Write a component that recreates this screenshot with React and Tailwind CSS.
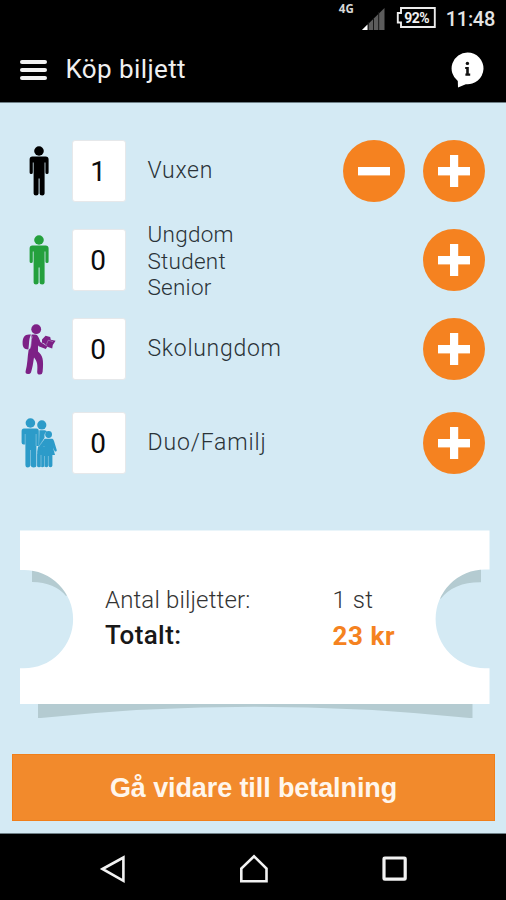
import React from "react";

function Adult({ color }) {
  return (
    <svg viewBox="0 0 20 50" className="h-[50px] w-[20px]" fill={color}>
      <ellipse cx="10" cy="5" rx="4.8" ry="4.7" />
      <path d="M3.4 10.6H16.6Q19.6 10.6 19.6 13.6V26.4Q19.6 28 18 28Q16.4 28 16.4 26.4V16.4H15.6V47.4Q15.6 49.4 13.2 49.4Q10.6 49.4 10.6 47.4V32.6H9.6V47.4Q9.6 49.4 7 49.4Q4.6 49.4 4.6 47.4V16.4H3.8V26.4Q3.8 28 2.2 28Q0.6 28 0.6 26.4V13.6Q0.6 10.6 3.4 10.6Z" />
    </svg>
  );
}

function Student() {
  return (
    <svg viewBox="0 0 34 51" className="h-[51px] w-[34px]" fill="#7d2186">
      <circle cx="14.2" cy="5.2" r="4.9" />
      <path d="M9 10.6C3 9.6 0.6 13 0.6 19C0.6 23.2 2 25.4 6.4 25.4C7.4 20 6.6 15 9 10.6Z" />
      <path d="M9.6 10.6H13.4C15.6 10.8 17 13.6 18.4 18L22.6 20.6L25.4 22.4L23.8 25L16.6 22.2L16 21.2V27.4C20.4 31 22 35 20.6 48Q20.2 50.8 17.8 50.6Q15.2 50.6 15.2 48C15.8 41 15.4 37.2 12 33.4C11.2 39 10.4 44 9 48.4Q8 50.2 6 50Q3 49.6 3.6 47.2C5.6 40.6 5.4 33 6.6 26C9.6 24.4 8.8 16 9.6 10.6Z" />
      <path d="M7.6 25C9.8 21.8 8.4 16 10.2 12.4" fill="none" stroke="#d4eaf4" strokeWidth="0.6" />
      <path d="M20 15.4L23.6 11.8L28.2 13L28.8 15.8L33.6 16.8L30.8 21L30.2 24.6L24.6 22.4L22.2 19.6L20 18.8Z" />
      <path d="M24.4 20.6L26.2 16.2M20.4 19L25.4 22.2M26.2 16.2L31 17.6" fill="none" stroke="#d4eaf4" strokeWidth="0.35" />
    </svg>
  );
}

function Family() {
  return (
    <svg viewBox="0 0 36 50" className="h-[50px] w-[36px]" fill="#2c9bc9">
      <ellipse cx="9.4" cy="5" rx="4.8" ry="4.7" />
      <path d="M3 10.6H15.4Q17.8 10.6 17.8 13.2V28H15.4V47.2Q15.4 49.4 12.6 49.4Q10 49.4 9.7 47.4V32H9.3V47.4Q9 49.4 6.8 49.4Q4.4 49.4 4.4 47.2V26L3.6 26.4Q0.6 27 0.6 24.4V13.2Q0.6 10.6 3 10.6Z" />
      <path d="M4.2 16V26M15.1 16V28" stroke="#d4eaf4" strokeWidth="0.4" />
      <circle cx="20.8" cy="6.9" r="4.6" />
      <path d="M18.4 12.2H23.6Q25.6 12.4 25.8 13.4Q22.8 14.8 23.6 19.6L19.8 27.4L23 29L23.8 36V48.6H16.2V33.4L17 29L18 27Z" />
      <circle cx="27.6" cy="16.5" r="3.4" />
      <path d="M23.6 20.8H31.4Q32.4 21 33 23L35.8 32.2Q35.6 34 33.8 33.4L32 29.4L34 37H31.4V47.6Q31.4 49.2 29.4 49.2Q27.6 49.2 27.4 47.6Q27.2 49.2 25.4 49.2Q23.6 49.2 23.4 47.6Q23 49.2 21.4 49.2Q20 49.2 20 48Q19.4 49.2 18 49.2Q16.4 49.2 16.4 48V36H20.6L23.4 28L19.6 31.4L17.6 29.6Z" />
      <path d="M23.2 20.6L17.6 29M20 37V48.5M23.5 38V48.5M27.4 38V48.5" fill="none" stroke="#d4eaf4" strokeWidth="0.4" />
    </svg>
  );
}

function RoundButton({ minus }) {
  return (
    <button className="flex size-[62px] items-center justify-center rounded-full bg-[#f58220]">
      <svg viewBox="0 0 32 32" className="size-8" fill="#fff">
        <rect x="0" y="12" width="32" height="8.4" />
        {!minus && <rect x="12" y="0" width="8.2" height="32.4" />}
      </svg>
    </button>
  );
}

function Row({ icon, count, label, labelClass, minus }) {
  return (
    <div className="flex h-[62px] items-center">
      <div className="flex w-[72px] justify-center pl-[5px]">{icon}</div>
      <div className="flex h-[62px] w-[54px] items-center justify-center rounded-[3px] border border-[#e6e8ea] bg-white pr-[2px] pt-[2px] font-['Roboto',sans-serif] text-[28px] leading-none text-[#0c0c0c]">
        {count}
      </div>
      <div className={`ml-[21.5px] flex-1 whitespace-pre-line font-['Roboto',sans-serif] font-light leading-[26.5px] text-[#2a3338] ${labelClass}`}>
        {label}
      </div>
      <div className="mr-[21px] flex gap-[18px]">
        {minus && <RoundButton minus />}
        <RoundButton />
      </div>
    </div>
  );
}

export default function App() {
  return (
    <div className="flex h-[900px] w-[506px] flex-col overflow-hidden bg-[#d4eaf4] font-['Roboto',sans-serif]">
      <header className="h-[103px] border-b border-[#6f8087] bg-black text-white">
        <div className="flex h-[37px] items-start justify-end pr-[11px]">
          <span className="mr-[8px] mt-[3px] font-['Open_Sans',sans-serif] text-[11.5px] font-bold leading-[12px] text-[#d8d8d8]">4G</span>
          <svg viewBox="0 0 23 22" className="mr-[11px] mt-[8px] h-[22px] w-[23px]">
            <path d="M0 22L22.5 0V22Z" fill="#5c5c5c" />
            <path d="M0 22L5.5 16.6V22Z" fill="#fff" />
            <path d="M6.3 14V22M11.5 10V22M16.7 4V22" stroke="#161616" strokeWidth="1" />
          </svg>
          <div className="relative mr-[10px] mt-[7px] flex h-[21px] w-[40px] items-center justify-center pl-[2px]">
            <svg viewBox="0 0 40 21" className="absolute inset-0 h-[21px] w-[40px]">
              <path d="M5 1H38.8V20H5V15.5H1.8V6H5Z" fill="none" stroke="#ececec" strokeWidth="1.9" />
            </svg>
            <span className="text-[14px] font-bold leading-none tracking-[-0.5px] text-[#f0f0f0]">92%</span>
          </div>
          <span className="mt-[9px] text-[20px] font-medium leading-[20px] tracking-[-0.3px] text-[#e4e4e4]">11:48</span>
        </div>
        <div className="flex h-[65px] items-center pl-[20px] pr-[22px]">
          <div className="flex w-[27px] flex-col gap-[4px]">
            <div className="h-[4px] rounded-[2px] bg-[#f2f2f2]" />
            <div className="h-[4px] rounded-[2px] bg-[#f2f2f2]" />
            <div className="h-[4px] rounded-[2px] bg-[#f2f2f2]" />
          </div>
          <h1 className="relative -top-px ml-[18.5px] flex-1 text-[26px] font-normal leading-none tracking-[0.4px] text-[#f0f0f0]">Köp biljett</h1>
          <svg viewBox="0 0 33 36" className="h-[36px] w-[33px]">
            <path d="M16.6 0.5A15.9 15.9 0 1 1 14.8 32.2L7 35.4L6.8 29A15.9 15.9 0 0 1 16.6 0.5Z" fill="#fff" />
            <circle cx="16.4" cy="11.4" r="1.7" fill="#111" />
            <path d="M14.2 15H17.8V21.6H19.2V23.8H14.4V21.6H15.2V17H14.2Z" fill="#111" />
          </svg>
        </div>
      </header>

      <main className="flex flex-1 flex-col">
        <section className="pt-[37px]">
          <Row icon={<Adult color="#000" />} count="1" label="Vuxen" labelClass="text-[23px] tracking-[0.7px]" minus />
          <div className="mt-[27px]">
            <Row icon={<Adult color="#24a03d" />} count="0" label={"Ungdom\nStudent\nSenior"} labelClass="text-[22.5px] tracking-[0.25px] pt-[2px]" />
          </div>
          <div className="mt-[27px]">
            <Row icon={<Student />} count="0" label="Skolungdom" labelClass="text-[23px] tracking-[0.7px]" />
          </div>
          <div className="mt-[32px]">
            <Row icon={<Family />} count="0" label="Duo/Familj" labelClass="text-[23px] tracking-[0.85px]" />
          </div>
        </section>

        <section className="relative ml-[20px] mt-[56px] h-[188px] w-[470px]">
          <svg viewBox="20 530 470 188" className="absolute inset-0 h-[188px] w-[470px]">
            <path d="M38 703H472.5V718.3Q253 695 38 718.3Z" fill="#b4cbd1" />
            <path d="M32 569H46L73 590L66 596Q55 582.5 32 582Z" fill="#b4cbd1" />
            <path d="M481 569H467L438 590L440.5 599Q454 582 481 582.3Z" fill="#b4cbd1" />
            <path d="M19.7 530.5H489.5V569.5H485A49.4 49.4 0 0 0 485 668.3H489.5V704H19.7V668.3H24A49.15 49.15 0 0 0 24 570H19.7Z" fill="#fff" />
          </svg>
          <div className="relative grid grid-cols-[227.5px_1fr] pl-[85px] pt-[53px]">
            <span className="text-[24px] font-light leading-[34px] tracking-[0.15px] text-[#333]">Antal biljetter:</span>
            <span className="text-[24px] font-light leading-[34px] tracking-[0.5px] text-[#333]">1 st</span>
            <span className="text-[26px] font-medium leading-[36px] tracking-[0.4px] text-[#181818]">Totalt:</span>
            <span className="text-[26px] font-bold leading-[38px] tracking-[0.6px] text-[#f58220]">23 kr</span>
          </div>
        </section>

        <button className="ml-[12px] mt-[36px] flex h-[67px] w-[483px] items-center justify-center border border-[#f07f1a] bg-[#f28a2c] pt-[2px] font-['Liberation_Sans',sans-serif] text-[27px] font-bold leading-none tracking-[-0.1px] text-[#fff6ec]">
          Gå vidare till betalning
        </button>
      </main>

      <nav className="h-[67px] border-t border-[#6f8087] bg-black">
        <svg viewBox="0 0 506 66" className="h-[66px] w-[506px]" fill="none" stroke="#f2f2f2" strokeWidth="2.6">
          <path d="M102.5 35L123.4 23.5V46.8Z" />
          <path d="M241.3 47.2V34.5L254 22.2L266.5 34.5V47.2Z" />
          <rect x="384" y="24" width="21.2" height="21.2" rx="0.8" strokeWidth="3.2" />
        </svg>
      </nav>
    </div>
  );
}
